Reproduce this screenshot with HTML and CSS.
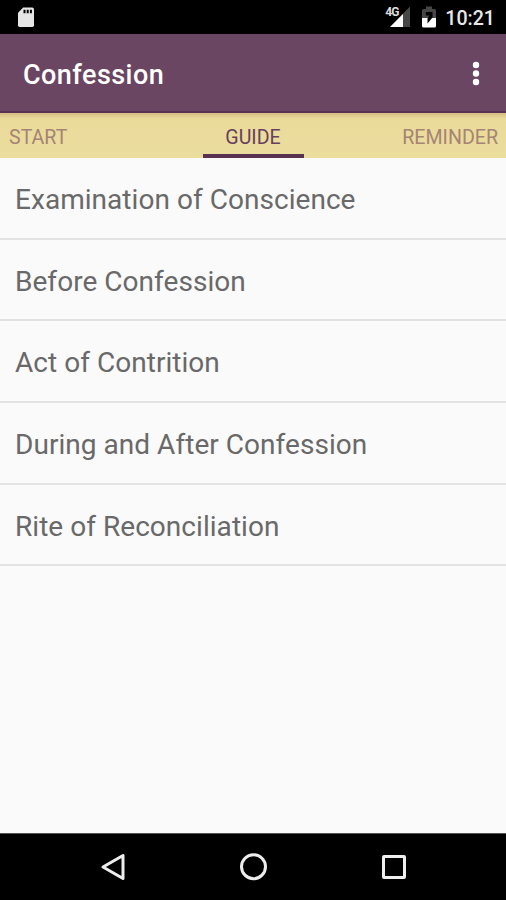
FILE: index.html
```html
<!DOCTYPE html>
<html lang="en">
<head>
<meta charset="utf-8">
<title>Confession</title>
<link rel="stylesheet" href="styles.css">
</head>
<body>
<div class="screen">
  <div class="status">
    <svg class="sd" width="18" height="22" viewBox="0 0 18 22"><path d="M6.200 .5H15.200Q17 .5 17 2.300V18.300Q17 20.100 15.200 20.100H2.700Q1 20.100 1 18.300V5.700Z" fill="#e6e6e6"/><path d="M6.500 2.700h2v3.600h-2zM9.700 2.700h2v3.600h-2zM12.900 2.700h2v3.600h-2z" fill="#000"/></svg>
    <div class="signal">
      <svg width="26" height="22" viewBox="0 0 26 22"><path d="M5 21L25 .5V21Z" fill="#474747"/><path d="M5 21L18 8V21Z" fill="#fff"/></svg>
      <span class="network">4G</span>
    </div>
    <svg class="battery" width="16" height="22" viewBox="0 0 16 22"><path d="M5 .5H11V3H13.500Q15 3 15 4.500V12H1V4.500Q1 3 2.500 3H5Z" fill="#474747"/><path d="M1 12H15V20Q15 21.500 13.500 21.500H2.500Q1 21.500 1 20Z" fill="#fff"/><path d="M4.800 6H11.500V11.500L6.500 17.500V12.500L8.500 9.500H4.800Z" fill="#000"/></svg>
    <time class="clock">10:21</time>
  </div>
  <header class="bar">
    <h1>Confession</h1>
    <svg width="8" height="26" viewBox="0 0 8 26" fill="#fff"><circle cx="4" cy="5" r="3.200"/><circle cx="4" cy="13.500" r="3.200"/><circle cx="4" cy="22" r="3.200"/></svg>
  </header>
  <nav class="tabs">
    <span class="tab start">START</span>
    <span class="tab active">GUIDE</span>
    <span class="tab end">REMINDER</span>
  </nav>
  <ul class="list">
    <li><span>Examination of Conscience</span></li>
    <li><span>Before Confession</span></li>
    <li><span>Act of Contrition</span></li>
    <li><span>During and After Confession</span></li>
    <li><span>Rite of Reconciliation</span></li>
  </ul>
  <footer class="navbar">
    <svg width="28" height="30" viewBox="0 0 28 30"><path d="M4 15L24 3.500V26.500Z"/></svg>
    <svg width="28" height="30" viewBox="0 0 28 30"><circle cx="13.500" cy="14.700" r="12"/></svg>
    <svg width="28" height="30" viewBox="0 0 28 30"><rect x="3.500" y="4.500" width="21" height="21" rx=".5"/></svg>
  </footer>
</div>
</body>
</html>
```
FILE: styles.css
```css
* { box-sizing: border-box; }
body { margin: 0; font-family: Roboto, "Liberation Sans", sans-serif; }
.screen { display: flex; flex-direction: column; width: 506px; height: 900px; background: #fafafa; }
.status { display: flex; align-items: flex-start; height: 34px; padding: 7px 11px 0 17px; background: #000; }
.signal { position: relative; height: 22px; margin: -1px 0 0 auto; }
.signal svg { display: block; }
.network { position: absolute; left: 0; top: 1px; color: #ddd; font-size: 12px; line-height: 11px; font-weight: 700; letter-spacing: -1px; }
.battery { margin: -1px 8px 0 10px; }
.clock { color: #e8e8e8; font-size: 19.600px; line-height: 24px; font-weight: 500; }
.bar { display: flex; align-items: center; justify-content: space-between; height: 79px; padding: 0 26px 0 23px; background: #6a4662; border-bottom: 2px solid #593153; color: #fff; }
.bar h1 { margin: 4px 0 0; font-size: 27px; line-height: 32px; font-weight: 500; letter-spacing: .45px; }
.tabs { display: grid; grid-template-columns: 1fr 101px 1fr; grid-template-rows: 45px; height: 45px; background: linear-gradient(#d5bd86, #eadb9b 6px, #ebdd9d); color: #a58476; font-size: 19.600px; line-height: 50px; }
.start { padding-left: 9px; }
.active { text-align: center; color: #67405f; border-bottom: 4px solid #593153; }
.end { text-align: right; padding-right: 8px; }
.list { flex: 1; margin: 0; padding: 0; list-style: none; }
.list li { display: flex; align-items: center; height: 81.700px; padding: 4px 15px 0; border-bottom: 2px solid #e3e3e3; color: #696969; font-size: 28px; line-height: 34px; letter-spacing: .04px; }
.navbar { display: flex; justify-content: space-between; align-items: center; height: 67px; padding: 0 98px 0 99px; border-top: 1px solid #555; background: #000; }
.navbar svg { fill: none; stroke: #eee; stroke-width: 3; stroke-linejoin: round; }
```
